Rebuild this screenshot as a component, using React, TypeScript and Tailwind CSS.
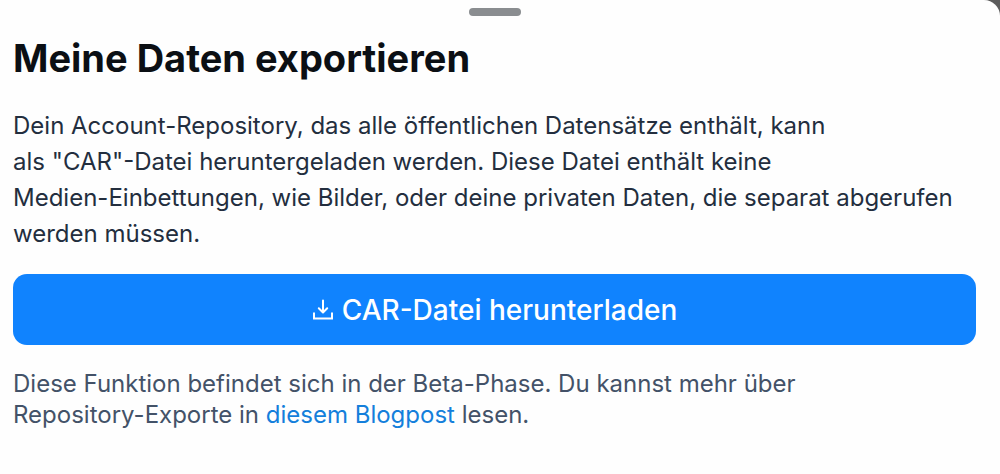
export default function App() {
  return (
    <div className="bg-[#5c5c5c] font-['Inter',sans-serif]">
      <main className="flex min-h-screen flex-col rounded-tr-[16px] bg-[#fefefe] pt-2 pr-6 pl-[13px]">
        <div className="h-2 w-[52px] self-center rounded-full bg-[#8a8d90]" />
        <h1 className="mt-5 text-[38px] leading-[44px] font-bold text-[#0b0f14]">Meine Daten exportieren</h1>
        <p className="mt-7 text-[24px] leading-9 text-[#232e3e]">
          Dein Account-Repository, das alle öffentlichen Datensätze enthält, kann
          <br />
          als "CAR"-Datei heruntergeladen werden. Diese Datei enthält keine
          <br />
          Medien-Einbettungen, wie Bilder, oder deine privaten Daten, die separat abgerufen werden müssen.
        </p>
        <button type="button" className="mt-[22px] flex h-[71px] items-center justify-center gap-2 rounded-[14px] bg-[#1083fe] text-[28px] font-medium text-white">
          <svg className="size-[22px]" viewBox="0 0 22 22" fill="none" stroke="currentColor" strokeWidth="2" strokeLinecap="round" strokeLinejoin="round" aria-hidden="true">
            <path d="M11 1.5v11.5M6.8 9.3l4.2 4.2 4.2-4.2" />
            <path d="M2 13.5v6h18v-6" strokeLinecap="butt" strokeLinejoin="miter" />
          </svg>
          CAR-Datei herunterladen
        </button>
        <p className="mt-[23px] text-[24px] leading-[31px] text-[#435268]">
          Diese Funktion befindet sich in der Beta-Phase. Du kannst mehr über
          <br />
          Repository-Exporte in <a href="#blog" className="text-[#147fdb]">diesem Blogpost</a> lesen.
        </p>
      </main>
    </div>
  );
}
